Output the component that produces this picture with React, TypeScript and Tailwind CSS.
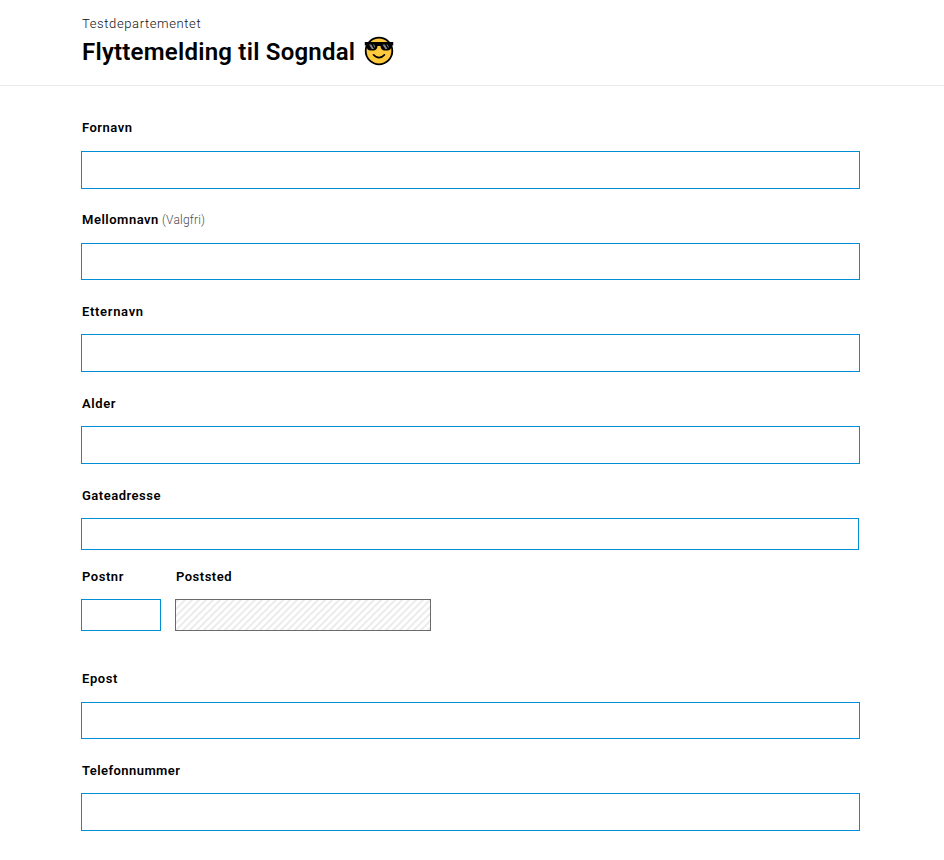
import React from "react";

type FieldProps = {
  label: string;
  tracking: string;
  optional?: boolean;
  className: string;
  inputClass: string;
};

function Field({ label, tracking, optional, className, inputClass }: FieldProps) {
  return (
    <label className={`flex flex-col ${className}`}>
      <span className="ml-px flex h-5 items-center gap-[3px] whitespace-nowrap text-[13px] leading-5">
        <span className={`font-semibold ${tracking}`}>{label}</span>
        {optional && <span className="text-[12px] font-light tracking-[0.2px] text-[#4a4a4a]">(Valgfri)</span>}
      </span>
      <input className={`mt-auto block border px-2 outline-none ${inputClass}`} />
    </label>
  );
}

function SunglassesFace() {
  return (
    <svg width="30" height="30" viewBox="0 0 30 30" aria-label="😎">
      <circle cx="15" cy="15" r="13.3" fill="#ffc83d" stroke="#000" strokeWidth="1.8" />
      <path d="M9.500 18.800c1.500 1.900 3.300 2.800 5.500 2.800s4-.9 5.500-2.800" fill="none" stroke="#000" strokeWidth="1.7" strokeLinecap="round" />
      <path
        d="M.8 6h28.400v3.500h-1.900v1c0 2.500-1.500 4-4 4h-2.600c-2.500 0-4-1.700-4.200-4.500h-3c-.2 2.800-1.700 4.500-4.200 4.500H6.700c-2.500 0-4-1.500-4-4v-1H.8z"
        fill="#000"
      />
      <path d="M5 8.500h2.300l2.700 4.500H7.800zM18.500 8.500h2.300l2.700 4.500h-2.200z" fill="#858585" />
      <path d="M9 8.500h1l1.300 2.400-.5.900zM22.500 8.500h1l1.300 2.400-.5.900z" fill="#858585" />
    </svg>
  );
}

export default function App() {
  return (
    <div className="h-[860px] w-full overflow-hidden bg-white font-['Roboto','Liberation_Sans',sans-serif] text-black">
      <header className="h-[86px] border-b border-[#ebebeb] pl-[82px] pt-[14px]">
        <p className="h-5 text-[13px] font-light leading-5 tracking-[0.61px] text-[#111]">Testdepartementet</p>
        <div className="flex h-9 items-center gap-[9px]">
          <h1 className="whitespace-nowrap text-[24px] font-semibold leading-9 tracking-[0.23px]">Flyttemelding til Sogndal</h1>
          <div className="pb-[2px]">
            <SunglassesFace />
          </div>
        </div>
      </header>
      <main className="ml-[81px] flex w-[779px] flex-col pt-[32px]">
        <Field label="Fornavn" tracking="tracking-[0.5px]" className="h-[71px]" inputClass="h-[38px] border-[#008fd6]" />
        <Field label="Mellomnavn" optional tracking="tracking-[0.52px]" className="mt-[21px] h-[70px]" inputClass="h-[37px] border-[#008fd6]" />
        <Field label="Etternavn" tracking="tracking-[0.68px]" className="mt-[22px] h-[70px]" inputClass="h-[38px] border-[#008fd6]" />
        <Field label="Alder" tracking="tracking-[0.6px]" className="mt-[22px] h-[70px]" inputClass="h-[38px] border-[#008fd6]" />
        <Field label="Gateadresse" tracking="tracking-[0.5px]" className="mt-[22px] h-[64px]" inputClass="h-8 w-[778px] border-[#008fd6]" />
        <div className="mt-[17px] flex gap-[14px]">
          <Field label="Postnr" tracking="tracking-[0.55px]" className="h-[64px] w-20" inputClass="h-8 w-full border-[#008fd6]" />
          <Field
            label="Poststed"
            tracking="tracking-[0.5px]"
            className="h-[64px] w-64"
            inputClass="h-8 w-full border-[#6a6a6a] bg-[repeating-linear-gradient(135deg,#ededed_0px,#ededed_2.2px,#fff_2.2px,#fff_4.95px)]"
          />
        </div>
        <Field label="Epost" tracking="tracking-[0.55px]" className="mt-[38px] h-[70px]" inputClass="h-[37px] border-[#008fd6]" />
        <Field label="Telefonnummer" tracking="tracking-[0.43px]" className="mt-[22px] h-[70px]" inputClass="h-[38px] border-[#008fd6]" />
      </main>
    </div>
  );
}
